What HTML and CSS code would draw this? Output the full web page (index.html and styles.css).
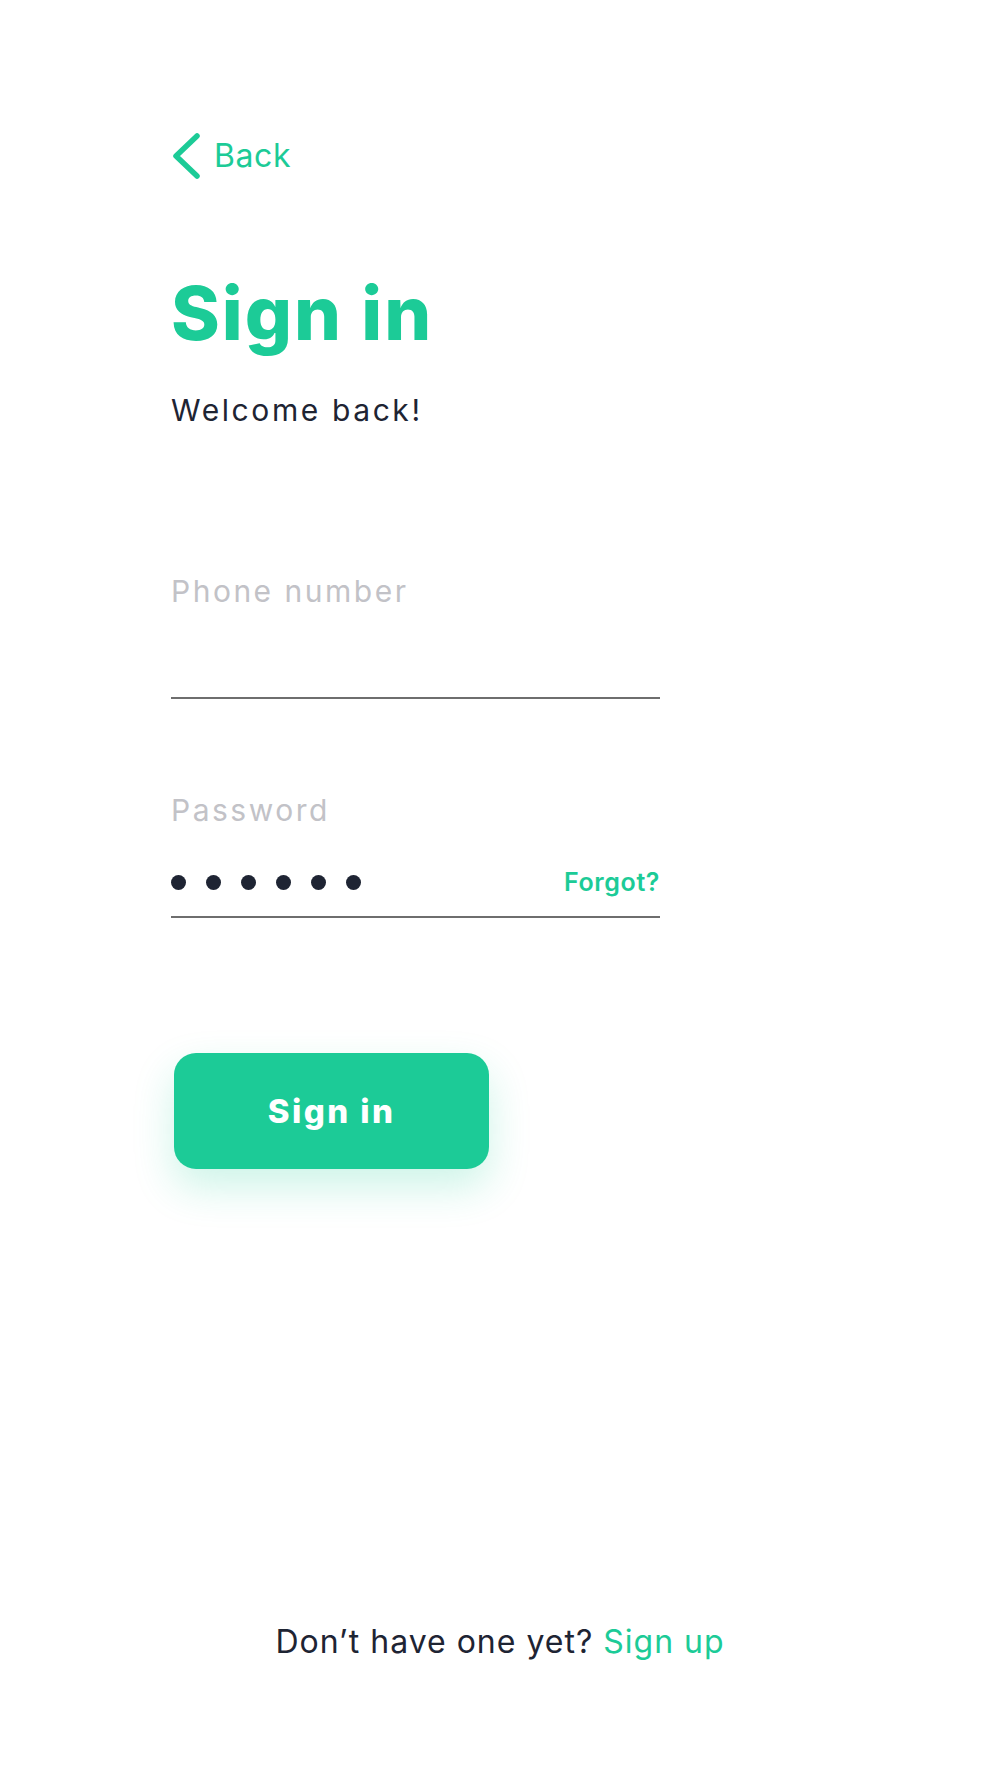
FILE: index.html
```html
<!DOCTYPE html>
<html lang="en">
<head>
    <meta charset="UTF-8">
    <meta name="viewport" content="width=device-width, initial-scale=1.0">
    <title>Sign in</title>
    <link rel="stylesheet" href="styles.css">
</head>
<body>
<main class="screen">
    <a href="#" class="back">
        <svg class="back-icon" width="30" height="48" viewBox="0 0 30 48">
            <path d="M25 4 L4 24 L25 44" fill="none" stroke="#1ccb97" stroke-width="5.5" stroke-linecap="round" stroke-linejoin="round"/>
        </svg>
        <span>Back</span>
    </a>

    <h1 class="title">Sign in</h1>
    <p class="subtitle">Welcome back!</p>

    <form class="form">
        <div class="field">
            <div class="field-label">Phone number</div>
            <div class="field-input"></div>
        </div>
        <div class="field field-password">
            <div class="field-label">Password</div>
            <div class="field-input">
                <div class="dots">
                    <span></span><span></span><span></span><span></span><span></span><span></span>
                </div>
                <a href="#" class="forgot">Forgot?</a>
            </div>
        </div>
        <button type="button" class="btn">Sign in</button>
    </form>

    <p class="footer">Don’t have one yet? <a href="#">Sign up</a></p>
</main>
</body>
</html>
```

FILE: styles.css
```css
body {
    margin: 0;
    padding: 0;
    background: #fff;
    font-family: Inter, "Open Sans", sans-serif;
    color: #1e2433;
}

.screen {
    min-height: 100vh;
    box-sizing: border-box;
    padding: 132px 0 116px 171px;
    display: flex;
    flex-direction: column;
}

.back {
    display: flex;
    align-items: center;
    gap: 12px;
    height: 48px;
    color: #1ccb97;
    text-decoration: none;
    font-size: 32px;
    line-height: 48px;
    letter-spacing: 0.6px;
    margin-left: 1px;
    width: max-content;
}

.back-icon {
    display: block;
}

.title {
    margin: 88px 0 0;
    font-size: 74px;
    line-height: 90px;
    font-weight: 800;
    color: #1ccb97;
    letter-spacing: 2px;
}

.subtitle {
    margin: 32px 0 0;
    font-size: 30px;
    line-height: 40px;
    letter-spacing: 2.6px;
    color: #1e2433;
}

.form {
    margin-top: 141px;
    width: 489px;
}

.field + .field {
    margin-top: 91px;
}

.field-label {
    font-size: 30px;
    line-height: 40px;
    letter-spacing: 2.5px;
    color: #c2c2c7;
}

.field-input {
    height: 88px;
    box-sizing: border-box;
    padding-bottom: 22px;
    border-bottom: 2px solid #6e6e6e;
    display: flex;
    align-items: flex-end;
    justify-content: space-between;
}

.dots {
    display: flex;
    align-items: center;
    gap: 20px;
    height: 24px;
}

.dots span {
    width: 15px;
    height: 15px;
    border-radius: 50%;
    background: #1e2433;
}

.forgot {
    font-size: 25px;
    line-height: 24px;
    font-weight: 600;
    letter-spacing: 0.6px;
    color: #1ccb97;
    text-decoration: none;
}

.btn {
    display: block;
    margin: 135px 0 0 3px;
    width: 315px;
    height: 116px;
    border: none;
    border-radius: 22px;
    background: #1ccb97;
    color: #fff;
    font-family: inherit;
    font-size: 33px;
    font-weight: 800;
    letter-spacing: 2.4px;
    cursor: pointer;
    box-shadow: 0 18px 40px rgba(28, 203, 151, 0.22);
}

.footer {
    margin: auto 0 0 -171px;
    text-align: center;
    font-size: 32px;
    line-height: 40px;
    letter-spacing: 1px;
    color: #1e2433;
}

.footer a {
    color: #1ccb97;
    text-decoration: none;
}
```
